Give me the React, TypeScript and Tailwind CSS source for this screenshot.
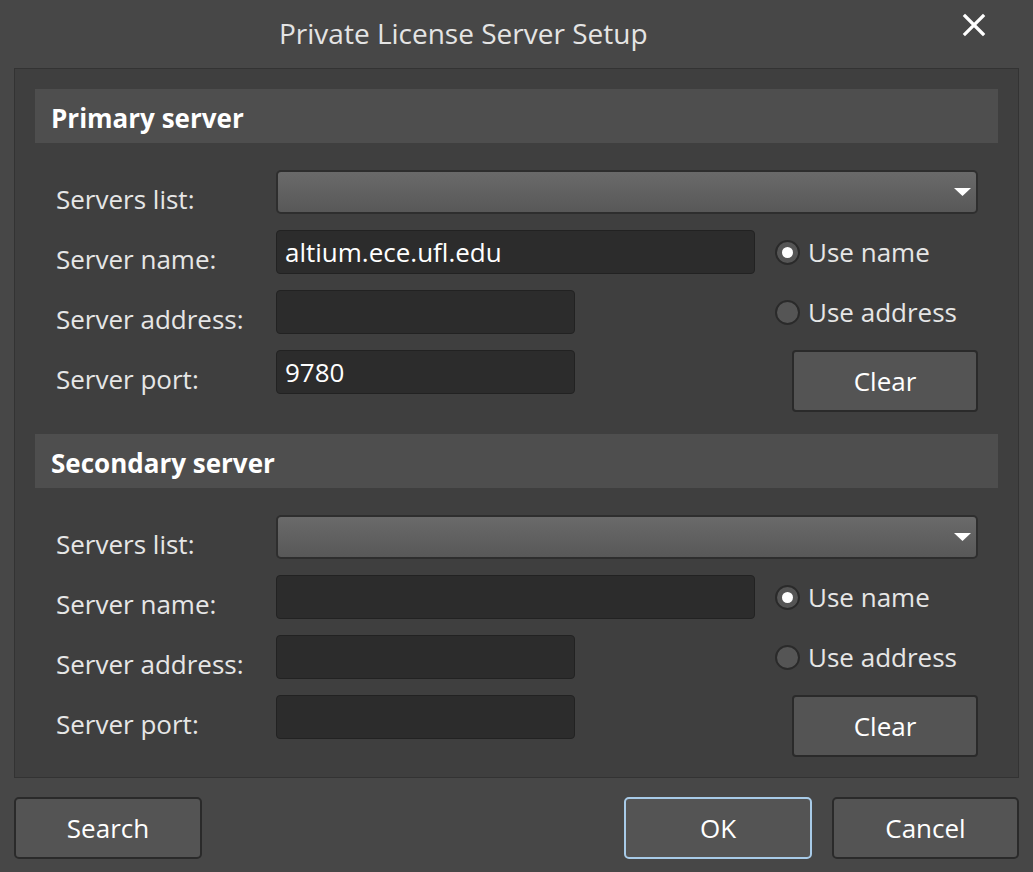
import React from 'react';

const font = { fontFamily: '"Open Sans", "Noto Sans", sans-serif' };

function Radio({ checked, label }: { checked?: boolean; label: string }) {
  return (
    <div className="flex items-center h-[44px]">
      <span className="w-[25px] h-[25px] rounded-full bg-[#555555] border-2 border-[#2a2a2a] flex items-center justify-center">
        {checked && <span className="w-[11px] h-[11px] rounded-full bg-white" />}
      </span>
      <span className="ml-[8px] text-[26px] text-[#e6e6e6]">{label}</span>
    </div>
  );
}

function Input({ width, value }: { width: string; value?: string }) {
  return (
    <div className={`${width} h-[44px] rounded-[4px] bg-[#2c2c2c] border border-[#222222] flex items-center px-[8px] text-[26px] text-white`}>
      {value}
    </div>
  );
}

function Section({ title, name, port }: { title: string; name?: string; port?: string }) {
  return (
    <div>
      <div className="h-[54px] bg-[#4e4e4e] flex items-center pl-[16px] pt-[4px] text-[26px] font-bold text-white">
        {title}
      </div>
      <div className="pl-[21px] pt-[27px] flex flex-col gap-[16px] text-[26px] text-[#e6e6e6]">
        <div className="flex items-center h-[44px]">
          <div className="w-[220px] pt-[14px]">Servers list:</div>
          <div className="w-[702px] h-[44px] rounded-[5px] border-2 border-[#2e2e2e] bg-gradient-to-b from-[#6a6a6a] to-[#585858] flex items-center justify-end pr-[5px]">
            <svg width="17" height="9" viewBox="0 0 17 9">
              <path d="M0 0 L17 0 L8.5 8 Z" fill="#ffffff" />
            </svg>
          </div>
        </div>
        <div className="flex items-center h-[44px]">
          <div className="w-[220px] pt-[14px]">Server name:</div>
          <div className="w-[499px]">
            <Input width="w-[479px]" value={name} />
          </div>
          <Radio checked label="Use name" />
        </div>
        <div className="flex items-center h-[44px]">
          <div className="w-[220px] pt-[14px]">Server address:</div>
          <div className="w-[499px]">
            <Input width="w-[299px]" />
          </div>
          <Radio label="Use address" />
        </div>
        <div className="flex items-start">
          <div className="w-[220px] h-[44px] flex items-center pt-[14px]">Server port:</div>
          <div className="w-[516px]">
            <Input width="w-[299px]" value={port} />
          </div>
          <button className="w-[186px] h-[62px] rounded-[4px] bg-[#545454] border-2 border-[#2a2a2a] text-[26px] text-white">
            Clear
          </button>
        </div>
      </div>
    </div>
  );
}

export default function App() {
  return (
    <div className="w-[1033px] h-[872px] bg-[#474747] relative overflow-hidden" style={font}>
      <div className="h-[68px] flex items-center pl-[279px]">
        <div className="text-[28px] text-[#e4e4e4] -mt-[2px]">Private License Server Setup</div>
      </div>
      <button className="absolute right-[47px] top-[13px] text-white">
        <svg width="24" height="24" viewBox="0 0 24 24">
          <path d="M3 3 L21 21 M21 3 L3 21" stroke="#ffffff" strokeWidth="3.2" strokeLinecap="square" />
        </svg>
      </button>
      <div className="mx-[14px] h-[710px] bg-[#3f3f3f] border border-[#333333] px-[20px] pt-[20px] flex flex-col gap-[22px]">
        <Section title="Primary server" name="altium.ece.ufl.edu" port="9780" />
        <Section title="Secondary server" />
      </div>
      <div className="flex items-center px-[14px] mt-[19px]">
        <button className="w-[188px] h-[62px] rounded-[5px] bg-[#545454] border-2 border-[#2a2a2a] text-[26px] text-white">
          Search
        </button>
        <div className="flex-1" />
        <button className="w-[188px] h-[62px] rounded-[5px] bg-[#545454] border-2 border-[#a8cbe8] text-[26px] text-white">
          OK
        </button>
        <button className="ml-[20px] w-[187px] h-[62px] rounded-[5px] bg-[#545454] border-2 border-[#2a2a2a] text-[26px] text-white">
          Cancel
        </button>
      </div>
    </div>
  );
}
